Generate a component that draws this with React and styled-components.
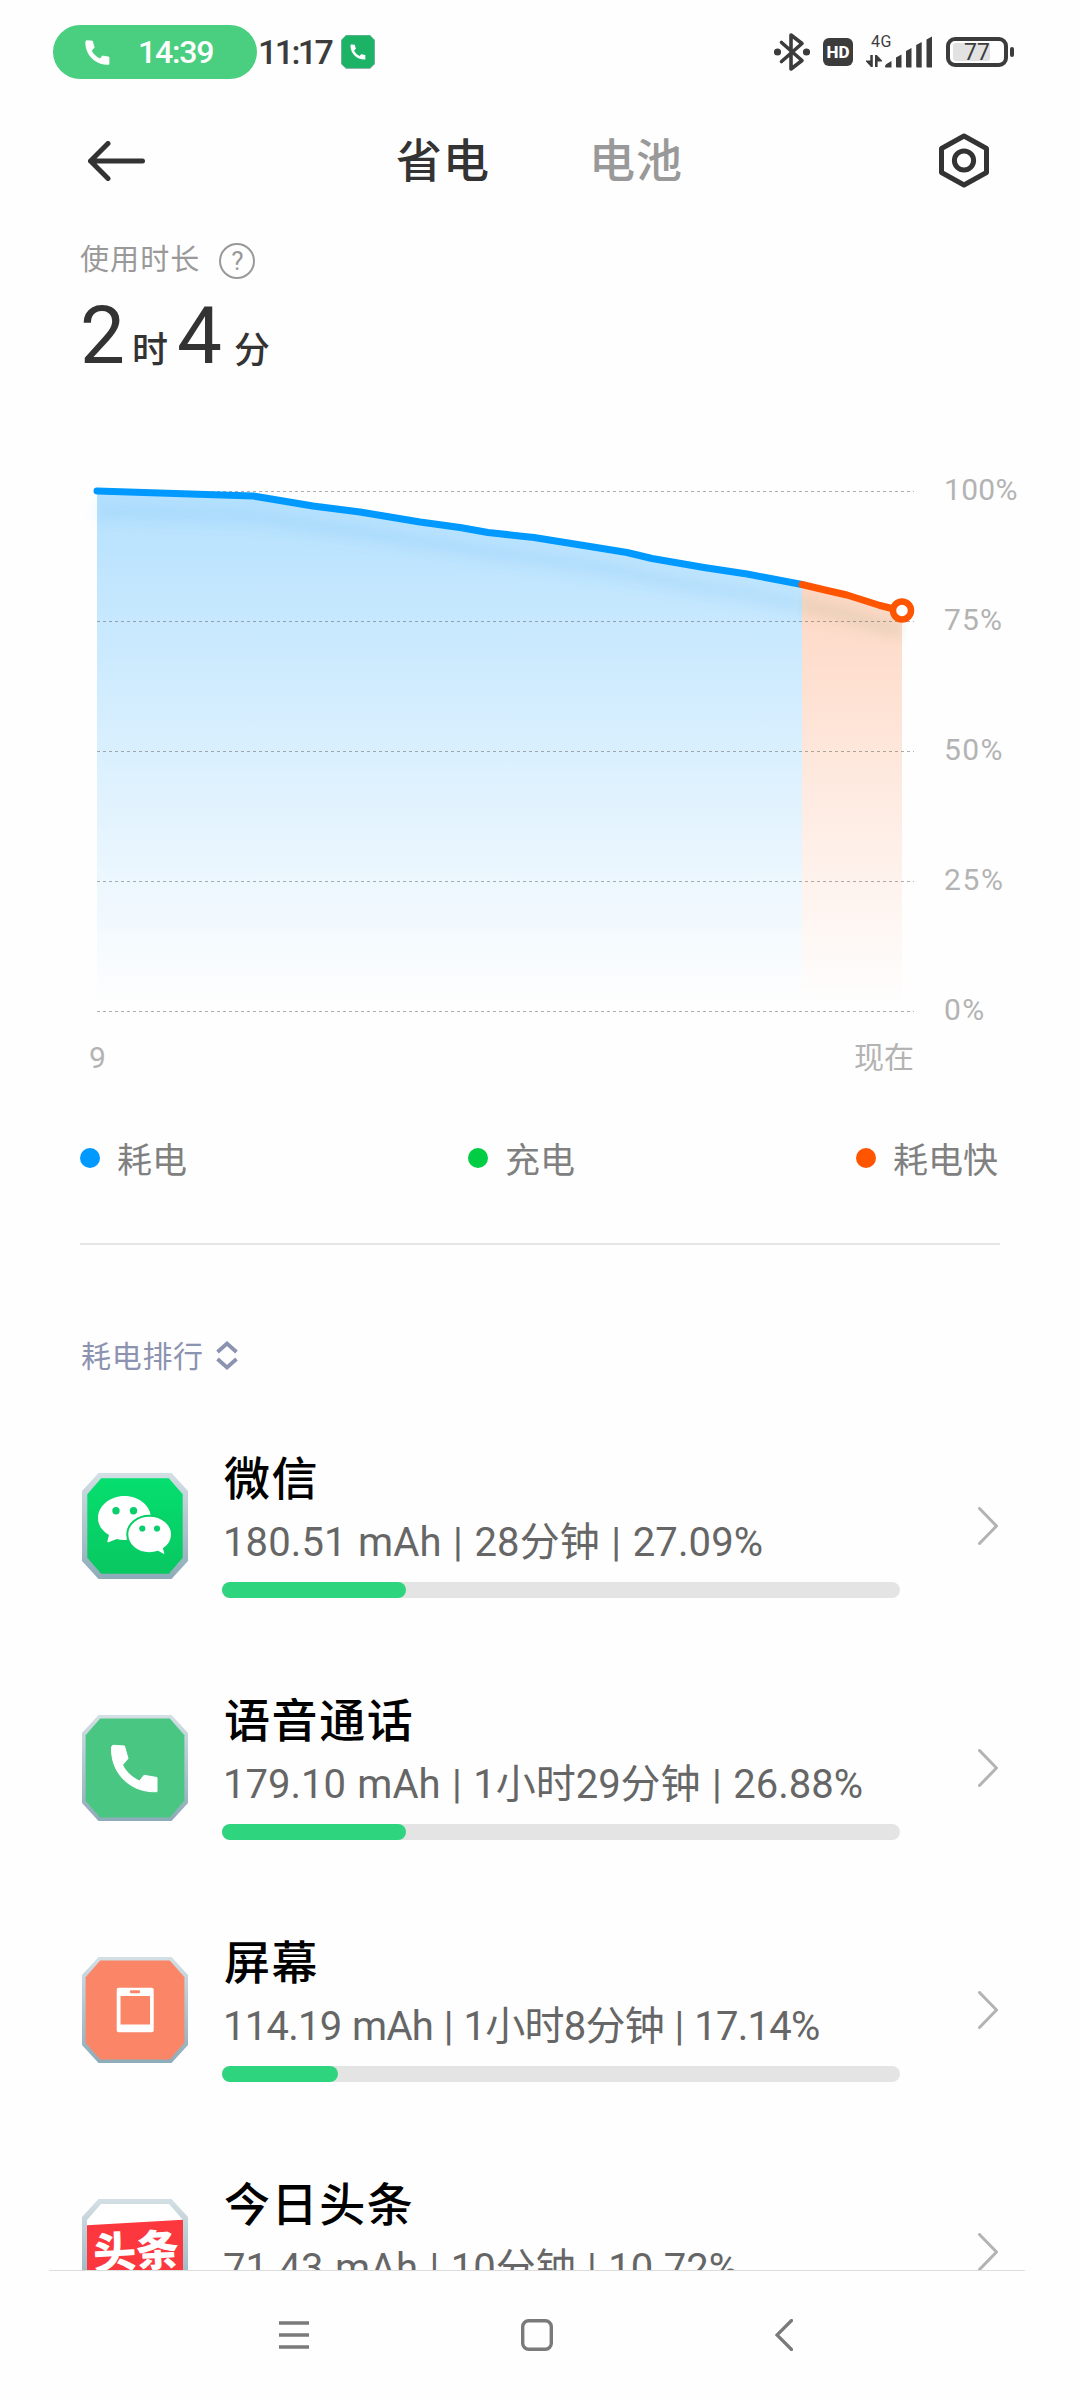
import React from "react";
import styled, {createGlobalStyle} from "styled-components";

const GlobalStyle = createGlobalStyle`
    * {
        box-sizing: border-box;
    }

    body {
        margin: 0;
        background: #ffffff;
        font-family: Roboto, "Noto Sans CJK SC", sans-serif;
    }

    svg {
        display: block;
        flex: none;
    }
`;

const Screen = styled.div`
    display: flex;
    flex-direction: column;
    width: 1080px;
    height: 2400px;
    overflow: hidden;
    background: #fefefe;
    color: #333333;
`;

const StatusBar = styled.header`
    display: flex;
    align-items: center;
    justify-content: space-between;
    height: 104px;
    padding: 0 66px 0 53px;
`;

const StatusGroup = styled.div`
    display: flex;
    align-items: center;
`;

const CallPill = styled.div`
    display: flex;
    align-items: center;
    width: 204px;
    height: 54px;
    padding-left: 32px;
    border-radius: 27px;
    background: #4acf80;
`;

const CallTime = styled.span`
    margin-left: 28px;
    color: #ffffff;
    font-size: 32px;
    font-weight: 500;
    line-height: 54px;
    letter-spacing: -1.2px;
`;

const Clock = styled.span`
    width: 76px;
    margin: 0 7px 0 1px;
    color: #3c3c3c;
    font-size: 34px;
    font-weight: 500;
    line-height: 56px;
    letter-spacing: -2.6px;
    white-space: nowrap;
`;

const HdBadge = styled.span`
    width: 30px;
    height: 28px;
    margin: 0 13px;
    border-radius: 6px;
    background: #3c3c3c;
    color: #ffffff;
    font-size: 17px;
    font-weight: 800;
    line-height: 29px;
    text-align: center;
`;

const Signal = styled.div`
    width: 66px;
    height: 32px;
    margin-right: 14px;
    color: #3c3c3c;
`;

const NetworkLabel = styled.div`
    height: 13px;
    padding-left: 5px;
    font-size: 16px;
    line-height: 11px;
    letter-spacing: 0.6px;
`;

const Battery = styled.div`
    display: flex;
    align-items: center;
`;

const BatteryCase = styled.div`
    width: 62px;
    height: 30px;
    padding: 2px 3px;
    border: 4px solid #3c3c3c;
    border-radius: 9px;
`;

const BatteryLevel = styled.div`
    width: 37px;
    height: 18px;
    padding-left: 11px;
    border-radius: 3px;
    background: #e2e2e2;
    color: #3c3c3c;
    font-size: 23px;
    line-height: 20px;
`;

const BatteryCap = styled.div`
    width: 4px;
    height: 10px;
    margin-left: 2px;
    border-radius: 2px;
    background: #3c3c3c;
`;

const TitleBar = styled.nav`
    display: grid;
    grid-template-columns: 308px 193px 350px 50px;
    align-items: center;
    height: 113px;
    padding-left: 88px;
`;

const Tab = styled.span`
    color: ${({active}) => active ? "#333333" : "#999999"};
    font-size: 46px;
    font-weight: 500;
    line-height: 64px;
    letter-spacing: 1px;
`;

const Summary = styled.section`
    height: 233px;
    padding: 26px 80px 0;
`;

const SummaryLabel = styled.div`
    display: flex;
    align-items: center;
    height: 36px;
    color: #999999;
    font-size: 29px;
    letter-spacing: 1.1px;
`;

const SummaryText = styled.span`
    padding-bottom: 2px;
    line-height: 36px;
`;

const HelpBadge = styled.span`
    width: 36px;
    height: 36px;
    margin-left: 19px;
    border: 2px solid #999999;
    border-radius: 50%;
    font-size: 26px;
    line-height: 32px;
    letter-spacing: 0;
    text-align: center;
`;

const Duration = styled.div`
    display: flex;
    align-items: baseline;
    height: 96px;
    margin-top: 9px;
    line-height: 96px;
`;

const DurationValue = styled.span`
    margin-left: ${({gap = 0}) => gap}px;
    font-size: 80px;
    font-weight: 450;
`;

const DurationUnit = styled.span`
    margin-left: ${({gap = 0}) => gap}px;
    font-size: 36px;
    font-weight: 500;
`;

const ChartRow = styled.section`
    display: flex;
    height: 670px;
`;

const Plot = styled.div`
    width: 914px;
`;

const PlotAxis = styled.div`
    display: flex;
    justify-content: space-between;
    padding: 6px 0 0 89px;
    color: #b3b3b3;
    font-size: 30px;
    line-height: 44px;
`;

const LevelAxis = styled.div`
    display: flex;
    flex-direction: column;
    padding: 18px 0 0 30px;
`;

const LevelLabel = styled.span`
    height: 130px;
    color: #b3b3b3;
    font-size: 30px;
    line-height: 44px;
    letter-spacing: ${({tracking}) => tracking}px;
`;

const Legend = styled.ul`
    display: flex;
    justify-content: space-between;
    height: 125px;
    margin: 0 80px;
    padding: 16px 0 0;
    border-bottom: 2px solid #e6e6e6;
    list-style: none;
`;

const LegendItem = styled.li`
    display: flex;
    flex: none;
    align-items: center;
    width: ${({last}) => last ? "144px" : "388px"};
    height: 44px;
    color: #808080;
    font-size: 35px;
    line-height: 44px;
    white-space: nowrap;
`;

const LegendLabel = styled.span`
    padding-top: 7px;
`;

const LegendDot = styled.span`
    flex: none;
    width: 20px;
    height: 20px;
    margin-right: 17px;
    border-radius: 50%;
    background: ${({color}) => color};
`;

const SortButton = styled.button`
    display: flex;
    align-items: center;
    gap: 12px;
    height: 44px;
    margin: 89px 0 0 81px;
    padding: 0;
    border: 0;
    background: none;
    color: #8c93b0;
    font: inherit;
    font-size: 30px;
    letter-spacing: 0.7px;
`;

const SortLabel = styled.span`
    padding-bottom: 4px;
`;

const Ranking = styled.main`
    flex: 1;
    min-height: 0;
    padding-top: 27px;
    overflow: hidden;
`;

const RankRow = styled.div`
    display: flex;
    align-items: center;
    height: 242px;
    padding: 0 82px;
`;

const RankBody = styled.div`
    width: 678px;
    height: 152px;
    margin: 0 78px 0 34px;
`;

const AppName = styled.div`
    padding-left: 2px;
    color: #000000;
    font-size: 46px;
    font-weight: 500;
    line-height: 58px;
    letter-spacing: 1.6px;
`;

const Usage = styled.div`
    height: 74px;
    padding-left: 1px;
    color: #666666;
    font-size: 40px;
    line-height: 70px;
    letter-spacing: ${({tracking}) => tracking}px;
    word-spacing: 1.5px;
    white-space: nowrap;
`;

const Track = styled.div`
    height: 16px;
    border-radius: 8px;
    background: #e4e4e4;
`;

const Fill = styled.div`
    height: 16px;
    border-radius: 8px;
    background: #2fd57e;
`;

const NavBar = styled.footer`
    display: flex;
    align-items: center;
    height: 130px;
    margin: 0 55px 0 49px;
    padding: 0 0 2px 230px;
    border-top: 1px solid #dddddd;
`;

const NavButton = styled.div`
    width: ${({width}) => width}px;
`;

const bluePoints = [
    [97, 491], [253, 496], [313, 506], [360, 512], [420, 522], [460, 527.5], [488, 532.5],
    [534, 537.5], [593, 547], [627, 552.5], [652, 558.5], [704, 567.5], [747, 574], [802, 584.5]
];
const orangePoints = [[802, 584.5], [825, 590], [847, 595], [880, 605.5], [902, 611]];

// chart coordinates start 450px down the page
const toLine = (points) => points.map(([x, y]) => `${x},${y - 450}`).join(" ");
const toArea = (points) => `${points[0][0]},561 ${toLine(points)} ${points[points.length - 1][0]},561`;

const BatteryChart = () => (
    <svg width="914" height="580" viewBox="0 0 914 580" overflow="visible">
        <defs>
            <linearGradient id="drain" gradientUnits="userSpaceOnUse" x1="0" y1="41" x2="0" y2="556">
                <stop offset="0" stopColor="#0099ff" stopOpacity="0.29"/>
                <stop offset="1" stopColor="#0099ff" stopOpacity="0"/>
            </linearGradient>
            <linearGradient id="fastDrain" gradientUnits="userSpaceOnUse" x1="0" y1="41" x2="0" y2="556">
                <stop offset="0" stopColor="#ff5500" stopOpacity="0.28"/>
                <stop offset="1" stopColor="#ff5500" stopOpacity="0"/>
            </linearGradient>
            <filter id="lineShadow" x="-5%" y="-50%" width="110%" height="200%">
                <feGaussianBlur stdDeviation="7"/>
            </filter>
        </defs>
        <polygon points={toArea(bluePoints)} fill="url(#drain)"/>
        <polygon points={toArea(orangePoints)} fill="url(#fastDrain)"/>
        <polyline
            points={toLine(bluePoints)}
            transform="translate(0 20)"
            fill="none"
            stroke="#3ca0e6"
            strokeOpacity="0.13"
            strokeWidth="14"
            filter="url(#lineShadow)"
        />
        <polyline
            points={toLine(orangePoints)}
            transform="translate(0 20)"
            fill="none"
            stroke="#6e965a"
            strokeOpacity="0.15"
            strokeWidth="14"
            filter="url(#lineShadow)"
        />
        {[41.5, 171.5, 301.5, 431.5, 561.5].map(y => (
            <line key={y} x1="97" x2="914" y1={y} y2={y} stroke="#555555" strokeOpacity="0.48" strokeDasharray="3 3"/>
        ))}
        <polyline points={toLine(bluePoints)} fill="none" stroke="#0099ff" strokeWidth="7" strokeLinecap="round" strokeLinejoin="round"/>
        <polyline points={toLine(orangePoints)} fill="none" stroke="#ff5500" strokeWidth="7" strokeLinecap="round" strokeLinejoin="round"/>
        <circle cx="902" cy="160.5" r="9" fill="#ffffff" stroke="#ff5500" strokeWidth="6.5"/>
    </svg>
);

const HANDSET = "M31.5 30.3L42.5 31L46 43.5L40.5 50C44 57 50 62.5 57.5 66L62 60.3L75 62.5L75 76.7C50 78 29 60 29.5 33Q29.5 30.3 31.5 30.3Z";

const Handset = ({size}) => (
    <svg width={size} height={size} viewBox="28 29 49 49">
        <path d={HANDSET} fill="#ffffff" stroke="#ffffff" strokeWidth="1.5" strokeLinejoin="round"/>
    </svg>
);

const CallBadge = () => (
    <svg width="34" height="34" viewBox="0 0 34 34">
        <path d="M5 0H29L34 5V29L29 34H5L0 29V5Z" fill="#8fb5ad"/>
        <path d="M5 0.5H29L33.3 5V29L29 33H5L0.7 29V5Z" fill="#1db367"/>
        <svg x="9" y="9" width="16" height="16" viewBox="28 29 49 49">
            <path d={HANDSET} fill="#ffffff"/>
        </svg>
    </svg>
);

const BluetoothIcon = () => (
    <svg width="36" height="40" viewBox="0 0 36 40" fill="none" stroke="#3c3c3c" strokeWidth="3.6" strokeLinejoin="round" strokeLinecap="round">
        <path d="M7.5 10.5L28 28.5L17 37V3L28 11.5L7.5 29.5"/>
        <circle cx="3.5" cy="20" r="1.8" fill="#3c3c3c"/>
        <circle cx="32.5" cy="20" r="1.8" fill="#3c3c3c"/>
    </svg>
);

const SignalGlyph = styled.svg`
    margin-top: -13px;
`;

const SignalBars = () => (
    <SignalGlyph width="66" height="32" viewBox="0 0 66 32" fill="#3c3c3c">
        <path d="M0 24.5L4.3 24.5V19H6.8V31H5L0 25.5ZM9 19H10.8L16 24.5V25.5H11.6V31H9Z"/>
        <path d="M19 30.5Q19 29 20.5 28L25.5 25V31.5H20Q19 31.5 19 30.5Z"/>
        <path d="M30 21.5L35.5 18.5V31.5H31Q30 31.5 30 30.5Z"/>
        <path d="M40 15L45.5 12V31.5H41Q40 31.5 40 30.5Z"/>
        <path d="M50.2 9L55.7 6V31.5H51.2Q50.2 31.5 50.2 30.5Z"/>
        <path d="M60.5 3.5L66 0.5V31.5H61.5Q60.5 31.5 60.5 30.5Z"/>
    </SignalGlyph>
);

const BackArrow = () => (
    <svg width="58" height="40" viewBox="0 0 58 40" fill="none" stroke="#333333" strokeWidth="5" strokeLinecap="round" strokeLinejoin="round">
        <path d="M20 2.5L2.5 20L20 37.5M2.5 20H54.5"/>
    </svg>
);

const SettingsIcon = () => (
    <svg width="50" height="56" viewBox="0 0 50 56" fill="none" stroke="#333333" strokeWidth="5" strokeLinejoin="round">
        <path d="M25 3L47.5 15.5V39.5L25 52L2.5 39.5V15.5Z"/>
        <circle cx="25" cy="27.5" r="9.6"/>
    </svg>
);

const SortIcon = () => (
    <svg width="22" height="30" viewBox="0 0 22 30" fill="none" stroke="#8c93b0" strokeWidth="3.8">
        <path d="M1.5 11L11 2.5L20.5 11M1.5 18L11 26.5L20.5 18"/>
    </svg>
);

const Chevron = () => (
    <svg width="20" height="38" viewBox="0 0 20 38" fill="none" stroke="#b3b3b3" strokeWidth="3" strokeLinecap="round" strokeLinejoin="round">
        <path d="M1.5 1.5L18.5 19L1.5 36.5"/>
    </svg>
);

const AppIcon = ({id, inset, background, children}) => {
    const far = 106 - inset;
    const cut = 16 + inset * 0.6;
    return (
        <svg width="106" height="106" viewBox="0 0 106 106">
            <defs>
                <linearGradient id={`rim-${id}`} x1="0" y1="0" x2="0" y2="1">
                    <stop offset="0" stopColor="#d3dfe4"/>
                    <stop offset="1" stopColor="#8dabb8"/>
                </linearGradient>
                <linearGradient id={`face-${id}`} x1="0" y1="0" x2="0" y2="1">
                    <stop offset="0" stopColor={background[0]}/>
                    <stop offset="1" stopColor={background[1]}/>
                </linearGradient>
                <clipPath id={`clip-${id}`}>
                    <path d={`M${cut} ${inset}H${106 - cut}L${far} ${cut + 2}V${104 - cut}L${106 - cut} ${far}H${cut}L${inset} ${104 - cut}V${cut + 2}Z`}/>
                </clipPath>
            </defs>
            <path d="M16.5 0H89.5L106 18V88L89.5 106H16.5L0 88V18Z" fill={`url(#rim-${id})`}/>
            <g clipPath={`url(#clip-${id})`}>
                <rect width="106" height="106" fill={`url(#face-${id})`}/>
                {children}
            </g>
        </svg>
    );
};

const WechatIcon = () => (
    <AppIcon id="wechat" inset={5.3} background={["#05e06f", "#08c660"]}>
        <path d="M42.5 23C57 23 69 33 69 45S57 67 42.5 67Q38.5 67 34.8 66L26.5 69.2Q25 69.5 25.4 68L27 62C20 58 16 52 16 45C16 33 28 23 42.5 23Z" fill="#ffffff"/>
        <path d="M67.5 42.8C80 42.8 90 51 90 61.5Q90 70.5 82 75.5L83.3 80.5Q83.3 82.5 81.5 81.8L76 78.8Q72 80.2 67.5 80.2C55 80.2 45.3 72 45.3 61.5S55 42.8 67.5 42.8Z" fill="#ffffff" stroke="#07cf66" strokeWidth="2"/>
        <circle cx="34" cy="37.7" r="3.7" fill="#0bcf6c"/>
        <circle cx="51.5" cy="37.7" r="3.7" fill="#0bcf6c"/>
        <circle cx="60.3" cy="55.5" r="3.1" fill="#0bcf6c"/>
        <circle cx="75" cy="55.5" r="3.1" fill="#0bcf6c"/>
    </AppIcon>
);

const VoiceCallIcon = () => (
    <AppIcon id="call" inset={3.6} background={["#4ac683", "#4ac683"]}>
        <path d={HANDSET} fill="#ffffff" stroke="#ffffff" strokeWidth="1" strokeLinejoin="round"/>
    </AppIcon>
);

const DisplayIcon = () => (
    <AppIcon id="display" inset={3.6} background={["#fa8567", "#fa8567"]}>
        <rect x="34.7" y="30.7" width="37" height="44.5" rx="2" fill="#ffffff"/>
        <rect x="38.5" y="39" width="29.5" height="28.5" fill="#fa8567"/>
        <rect x="48" y="33.3" width="10" height="3" rx="1" fill="#fa8567"/>
    </AppIcon>
);

const ToutiaoIcon = () => (
    <AppIcon id="toutiao" inset={5} background={["#ffffff", "#ffffff"]}>
        <path d="M0 26.5L106 20.5V106H0Z" fill="#fc373d"/>
        <text x="11" y="68" fill="#ffffff" fontSize="43" fontWeight="900" transform="rotate(-3 53 50)">头条</text>
    </AppIcon>
);

const levels = [
    {label: "100%", tracking: 0.3},
    {label: "75%", tracking: 1.2},
    {label: "50%", tracking: 1.4},
    {label: "25%", tracking: 1.6},
    {label: "0%", tracking: 1.5}
];

const legend = [
    {label: "耗电", color: "#0099ff"},
    {label: "充电", color: "#00cc44"},
    {label: "耗电快", color: "#ff5500"}
];

const apps = [
    {name: "微信", usage: "180.51 mAh | 28分钟 | 27.09%", share: 27.09, tracking: 0.1, icon: <WechatIcon/>},
    {name: "语音通话", usage: "179.10 mAh | 1小时29分钟 | 26.88%", share: 27.09, tracking: 0, icon: <VoiceCallIcon/>},
    {name: "屏幕", usage: "114.19 mAh | 1小时8分钟 | 17.14%", share: 17.14, tracking: -0.75, icon: <DisplayIcon/>},
    {name: "今日头条", usage: "71.43 mAh | 10分钟 | 10.72%", share: 10.72, tracking: 0, icon: <ToutiaoIcon/>}
];

export default function App() {
    return <>
        <GlobalStyle/>
        <Screen>
            <StatusBar>
                <StatusGroup>
                    <CallPill>
                        <Handset size={25}/>
                        <CallTime>14:39</CallTime>
                    </CallPill>
                    <Clock>11:17</Clock>
                    <CallBadge/>
                </StatusGroup>
                <StatusGroup>
                    <BluetoothIcon/>
                    <HdBadge>HD</HdBadge>
                    <Signal>
                        <NetworkLabel>4G</NetworkLabel>
                        <SignalBars/>
                    </Signal>
                    <Battery>
                        <BatteryCase>
                            <BatteryLevel>77</BatteryLevel>
                        </BatteryCase>
                        <BatteryCap/>
                    </Battery>
                </StatusGroup>
            </StatusBar>

            <TitleBar>
                <BackArrow/>
                <Tab active>省电</Tab>
                <Tab>电池</Tab>
                <SettingsIcon/>
            </TitleBar>

            <Summary>
                <SummaryLabel>
                    <SummaryText>使用时长</SummaryText>
                    <HelpBadge>?</HelpBadge>
                </SummaryLabel>
                <Duration>
                    <DurationValue>2</DurationValue>
                    <DurationUnit gap={7}>时</DurationUnit>
                    <DurationValue gap={9}>4</DurationValue>
                    <DurationUnit gap={12}>分</DurationUnit>
                </Duration>
            </Summary>

            <ChartRow>
                <Plot>
                    <BatteryChart/>
                    <PlotAxis>
                        <span>9</span>
                        <span>现在</span>
                    </PlotAxis>
                </Plot>
                <LevelAxis>
                    {levels.map(({label, tracking}) => (
                        <LevelLabel key={label} tracking={tracking}>{label}</LevelLabel>
                    ))}
                </LevelAxis>
            </ChartRow>

            <Legend>
                {legend.map(({label, color}, index) => (
                    <LegendItem key={label} last={index === legend.length - 1 ? 1 : undefined}>
                        <LegendDot color={color}/>
                        <LegendLabel>{label}</LegendLabel>
                    </LegendItem>
                ))}
            </Legend>

            <SortButton>
                <SortLabel>耗电排行</SortLabel>
                <SortIcon/>
            </SortButton>

            <Ranking>
                {apps.map(({name, usage, share, tracking, icon}) => (
                    <RankRow key={name}>
                        {icon}
                        <RankBody>
                            <AppName>{name}</AppName>
                            <Usage tracking={tracking}>{usage}</Usage>
                            <Track>
                                <Fill style={{width: `${share}%`}}/>
                            </Track>
                        </RankBody>
                        <Chevron/>
                    </RankRow>
                ))}
            </Ranking>

            <NavBar>
                <NavButton width={242}>
                    <svg width="30" height="28" viewBox="0 0 30 28" stroke="#7a7a7a" strokeWidth="3.4">
                        <path d="M0 2H30M0 14H30M0 26H30"/>
                    </svg>
                </NavButton>
                <NavButton width={254}>
                    <svg width="32" height="32" viewBox="0 0 32 32" fill="none" stroke="#7a7a7a" strokeWidth="3.4">
                        <rect x="1.7" y="1.7" width="28.6" height="28.6" rx="6"/>
                    </svg>
                </NavButton>
                <NavButton width={20}>
                    <svg width="18" height="32" viewBox="0 0 18 32" fill="none" stroke="#7a7a7a" strokeWidth="3.2" strokeLinecap="round">
                        <path d="M16.5 1.5L2 16L16.5 30.5"/>
                    </svg>
                </NavButton>
            </NavBar>
        </Screen>
    </>;
}
